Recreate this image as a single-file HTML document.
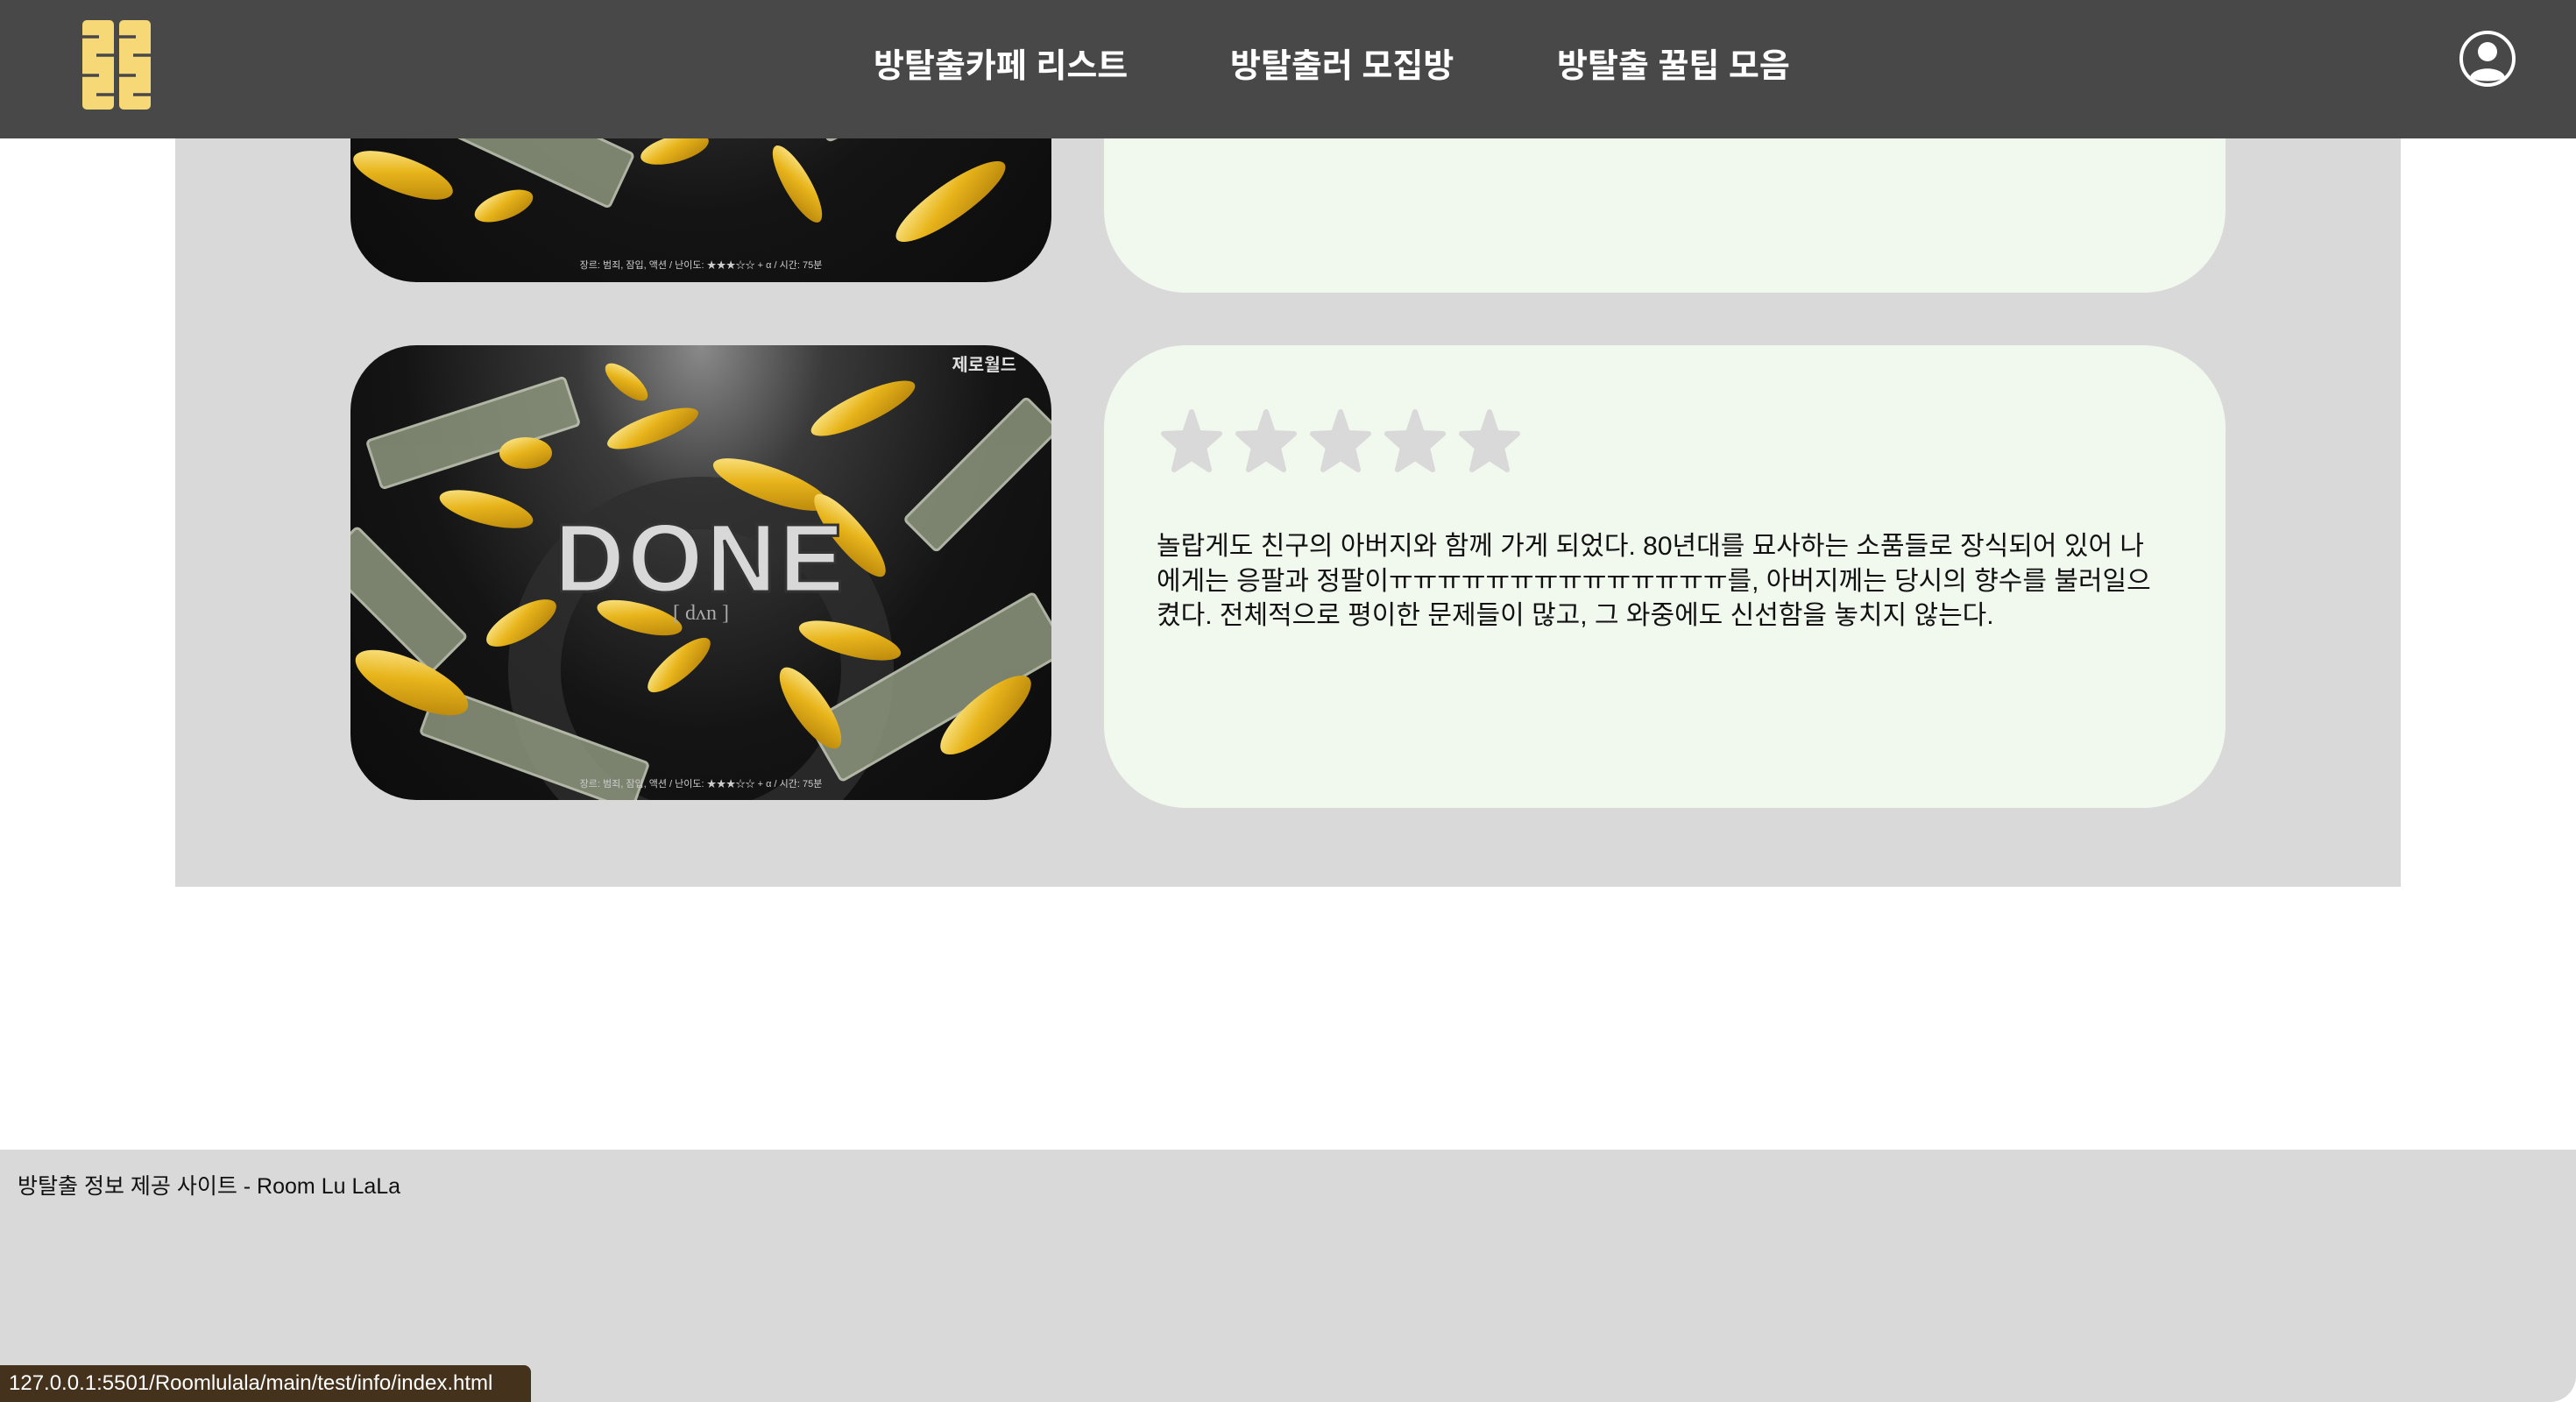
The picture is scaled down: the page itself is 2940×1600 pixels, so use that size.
<!DOCTYPE html>
<html><head><meta charset="utf-8"><style>
*{margin:0;padding:0;box-sizing:border-box}
body{width:2940px;height:1600px;position:relative;background:#fff;font-family:"Liberation Sans","Noto Sans CJK KR",sans-serif;overflow:hidden}
.header{position:absolute;left:0;top:0;width:2940px;height:158px;background:#484848;z-index:5}
.nav{position:absolute;top:44px;color:#fff;font-weight:bold;font-size:38px;white-space:nowrap}
.main{position:absolute;left:200px;top:0;width:2540px;height:1012px;background:#d9d9d9}
.img{position:absolute;left:400px;width:800px;border-radius:75px;overflow:hidden;background:radial-gradient(ellipse at 50% 0%,#8a8a8a 0%,#3a3a3a 25%,#141414 60%,#0c0c0c 100%)}
.card{position:absolute;left:1260px;width:1280px;background:#f1f8ee;border-radius:94px}
.coin{position:absolute;border-radius:50%;background:linear-gradient(160deg,#fff0a0,#e8b51c 45%,#b07d08);}
.bill{position:absolute;background:#8e977f;border:3px solid #c9cfbb;border-radius:6px;opacity:.85}
.stars{position:absolute;left:1324px;top:466px}
.txt{position:absolute;left:1320px;top:604px;font-size:30px;line-height:39.5px;color:#111;white-space:nowrap}
.footer{position:absolute;left:0;top:1312px;width:2940px;height:288px;background:#d9d9d9;border-bottom-right-radius:30px}
</style></head><body>
<div class="main"></div>

<div class="img" style="top:-200px;height:522px">
  <div class="bill" style="left:120px;top:330px;width:200px;height:70px;transform:rotate(25deg)"></div>
  <div class="bill" style="left:520px;top:250px;width:220px;height:70px;transform:rotate(-25deg)"></div>
  <div class="coin" style="left:0;top:380px;width:120px;height:40px;transform:rotate(20deg)"></div>
  <div class="coin" style="left:140px;top:420px;width:70px;height:30px;transform:rotate(-20deg)"></div>
  <div class="coin" style="left:330px;top:355px;width:80px;height:30px;transform:rotate(-15deg)"></div>
  <div class="coin" style="left:460px;top:395px;width:100px;height:30px;transform:rotate(60deg)"></div>
  <div class="coin" style="left:610px;top:410px;width:150px;height:40px;transform:rotate(-35deg)"></div>
  <div style="position:absolute;left:0;top:494px;width:800px;text-align:center;color:#ccc;font-size:11px">장르: 범죄, 잠입, 액션 / 난이도: ★★★☆☆ + α / 시간: 75분</div>
</div>
<div class="card" style="top:-200px;height:534px"></div>

<div class="img" style="top:394px;height:519px">
  <div style="position:absolute;left:180px;top:150px;width:440px;height:440px;border-radius:50%;border:60px solid #2e2e2e;opacity:.8"></div>
  <div class="bill" style="left:20px;top:70px;width:240px;height:60px;transform:rotate(-18deg)"></div>
  <div class="bill" style="left:620px;top:120px;width:200px;height:55px;transform:rotate(-45deg)"></div>
  <div class="bill" style="left:-40px;top:260px;width:180px;height:60px;transform:rotate(45deg)"></div>
  <div class="bill" style="left:520px;top:350px;width:300px;height:80px;transform:rotate(-30deg)"></div>
  <div class="bill" style="left:80px;top:430px;width:260px;height:60px;transform:rotate(20deg)"></div>
  <div class="coin" style="left:285px;top:30px;width:60px;height:24px;transform:rotate(40deg)"></div>
  <div class="coin" style="left:290px;top:80px;width:110px;height:30px;transform:rotate(-20deg)"></div>
  <div class="coin" style="left:520px;top:55px;width:130px;height:34px;transform:rotate(-25deg)"></div>
  <div class="coin" style="left:170px;top:105px;width:60px;height:36px"></div>
  <div class="coin" style="left:410px;top:140px;width:140px;height:38px;transform:rotate(20deg)"></div>
  <div class="coin" style="left:100px;top:170px;width:110px;height:34px;transform:rotate(15deg)"></div>
  <div class="coin" style="left:510px;top:200px;width:120px;height:34px;transform:rotate(50deg)"></div>
  <div class="coin" style="left:150px;top:300px;width:90px;height:34px;transform:rotate(-30deg)"></div>
  <div class="coin" style="left:280px;top:295px;width:100px;height:32px;transform:rotate(15deg)"></div>
  <div class="coin" style="left:510px;top:320px;width:120px;height:34px;transform:rotate(15deg)"></div>
  <div class="coin" style="left:330px;top:350px;width:90px;height:30px;transform:rotate(-40deg)"></div>
  <div class="coin" style="left:470px;top:395px;width:110px;height:38px;transform:rotate(55deg)"></div>
  <div class="coin" style="left:0px;top:360px;width:140px;height:50px;transform:rotate(25deg)"></div>
  <div class="coin" style="left:660px;top:400px;width:130px;height:44px;transform:rotate(-40deg)"></div>
  <div style="position:absolute;left:0;top:180px;width:800px;text-align:center;color:#d8d8d8;font-size:110px;font-weight:bold;font-family:'Liberation Sans',sans-serif;letter-spacing:4px;-webkit-text-stroke:3px #333">DONE</div>
  <div style="position:absolute;left:0;top:293px;width:800px;text-align:center;color:#aaa;font-size:24px;font-family:'Liberation Serif',serif">[ dʌn ]</div>
  <div style="position:absolute;right:40px;top:6px;color:#ddd;font-size:20px;font-weight:bold">제로월드</div>
  <div style="position:absolute;left:0;top:492px;width:800px;text-align:center;color:#ccc;font-size:11px">장르: 범죄, 잠입, 액션 / 난이도: ★★★☆☆ + α / 시간: 75분</div>
</div>
<div class="card" style="top:394px;height:528px"></div>
<svg class="stars" width="440" height="76" viewBox="0 0 440 76">
  <defs><path id="s" d="M36 4 L44 28 L68 29 L50 45 L56 70 L36 57 L16 70 L22 45 L4 29 L28 28 Z" fill="#d9d9d9" stroke="#d9d9d9" stroke-width="6" stroke-linejoin="round"/></defs>
  <use href="#s" x="0"/><use href="#s" x="85"/><use href="#s" x="170"/><use href="#s" x="255"/><use href="#s" x="340"/>
</svg>
<div class="txt">놀랍게도 친구의 아버지와 함께 가게 되었다. 80년대를 묘사하는 소품들로 장식되어 있어 나<br>에게는 응팔과 정팔이ㅠㅠㅠㅠㅠㅠㅠㅠㅠㅠㅠㅠㅠㅠ를, 아버지께는 당시의 향수를 불러일으<br>켰다. 전체적으로 평이한 문제들이 많고, 그 와중에도 신선함을 놓치지 않는다.</div>

<div class="header">
  <svg style="position:absolute;left:93px;top:22px" width="80" height="104" viewBox="0 0 80 104">
    <rect x="1" y="1" width="36" height="102" rx="5" fill="#f6d877"/>
    <rect x="43" y="1" width="36" height="102" rx="5" fill="#f6d877"/>
    <g stroke="#484848" stroke-width="3.5" fill="none">
      <path d="M0 20H20M37 41H17M0 64H20M37 86H17"/>
      <path d="M42 20H62M80 41H59M42 64H62M80 86H59"/>
    </g>
  </svg>
  <div class="nav" style="left:997px">방탈출카페 리스트</div>
  <div class="nav" style="left:1404px">방탈출러 모집방</div>
  <div class="nav" style="left:1777px">방탈출 꿀팁 모음</div>
  <svg style="position:absolute;left:2805px;top:33px" width="68" height="68" viewBox="0 0 68 68">
    <circle cx="34" cy="34" r="30" fill="none" stroke="#fff" stroke-width="4"/>
    <circle cx="34" cy="26" r="11" fill="#fff"/>
    <path d="M14 55 C18 42 50 42 54 55 C48 61 20 61 14 55Z" fill="#fff"/>
  </svg>
</div>

<div class="footer"><div style="position:absolute;left:20px;top:22px;font-size:25px;color:#111">방탈출 정보 제공 사이트 - Room Lu LaLa</div></div>
<div style="position:absolute;left:0;top:1558px;width:606px;height:42px;background:#45321c;border-top-right-radius:8px;color:#fff;font-size:24px;line-height:42px;padding-left:10px;white-space:nowrap">127.0.0.1:5501/Roomlulala/main/test/info/index.html</div>
</body></html>
